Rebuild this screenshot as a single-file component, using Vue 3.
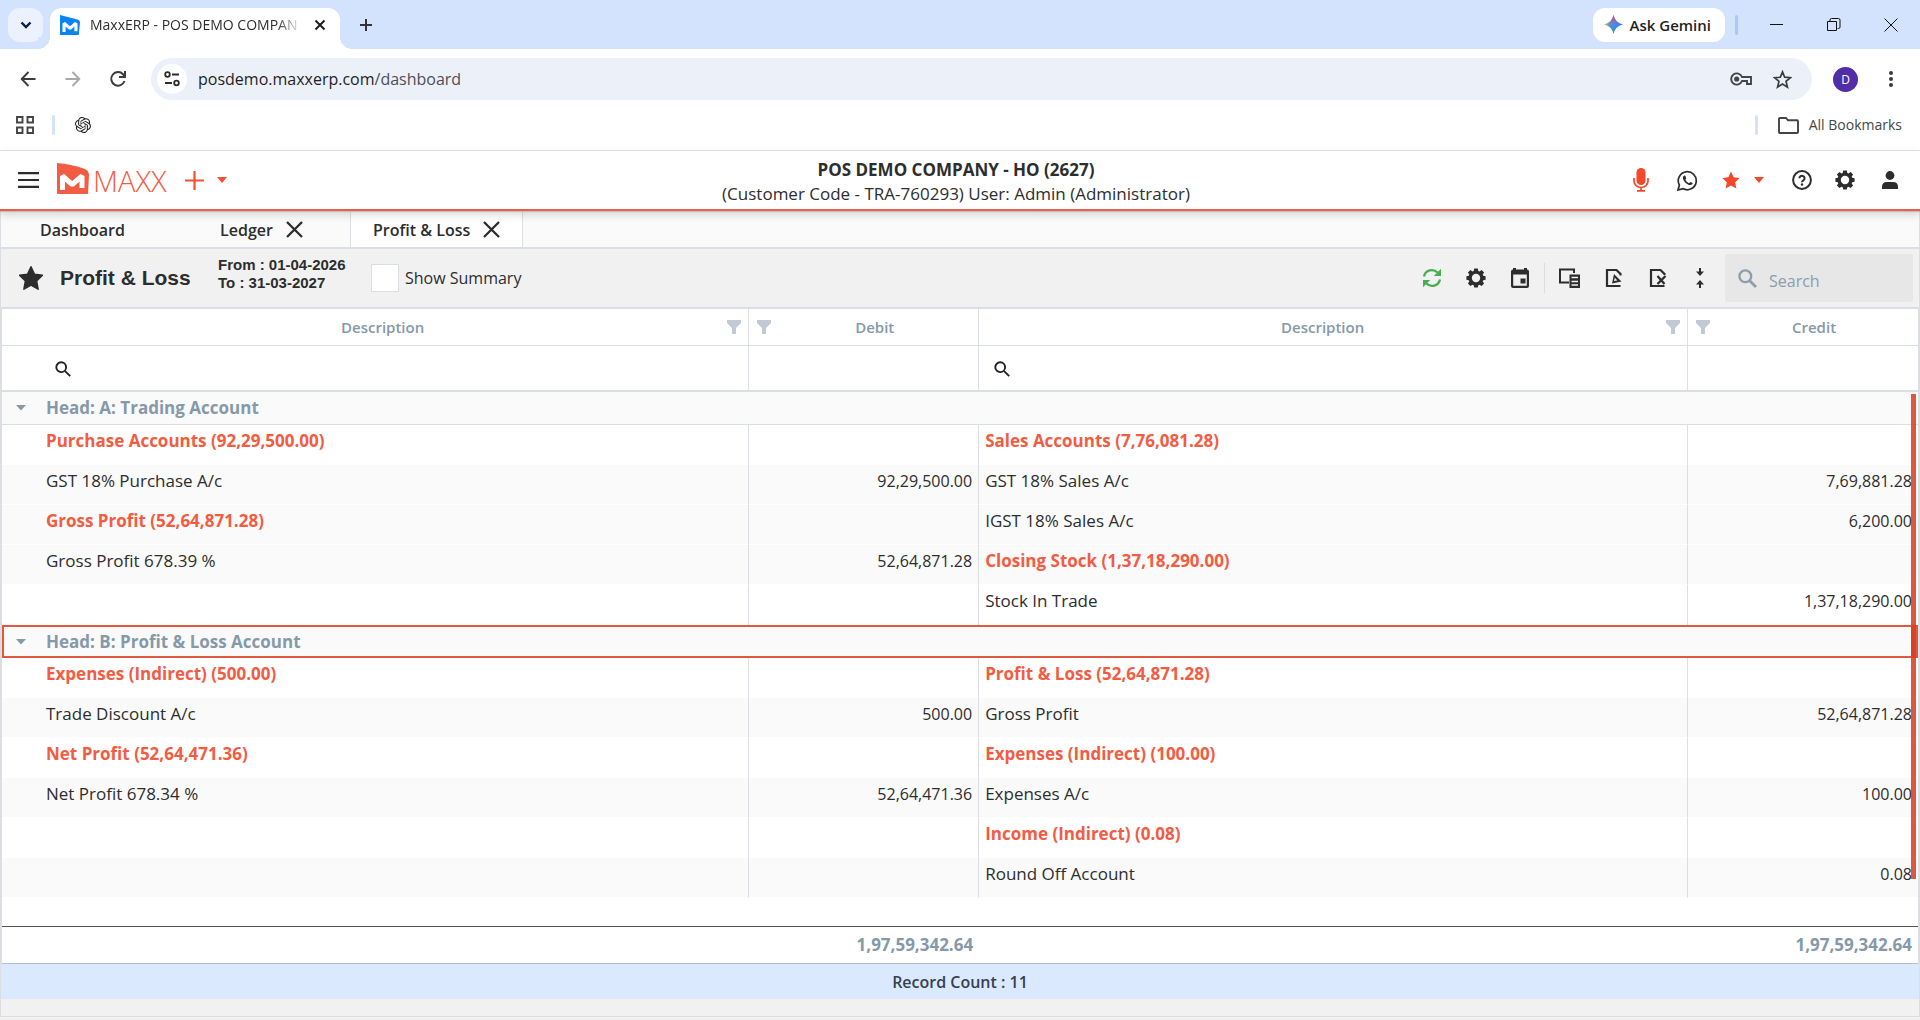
<template>
  <div class="page">
    <header class="browser">
      <div class="tab-strip">
        <button class="tab-search" aria-label="Search tabs">
          <svg width="14" height="14" viewBox="0 0 14 14"><path d="M2.5 4.5 7 9l4.5-4.5" fill="none" stroke="#0b1d4d" stroke-width="2.4" /></svg>
        </button>
        <div class="browser-tab">
          <svg width="20" height="20" viewBox="0 0 32 32"><path d="M0 0 28 7q4 1 4 5l-2 20H0z" fill="#0a84f0" /><path d="M6.500 27V13L16 21.500 25.500 13v13" fill="none" stroke="#fff" stroke-width="5" stroke-linejoin="bevel" /></svg>
          <span class="browser-tab-title">MaxxERP - POS DEMO COMPAN</span>
          <button class="plain" aria-label="Close tab">
            <svg width="12" height="12" viewBox="0 0 12 12"><path d="m1.500 1.500 9 9m0-9-9 9" stroke="#1f1f1f" stroke-width="2" /></svg>
          </button>
        </div>
        <button class="plain new-tab" aria-label="New tab">
          <svg width="14" height="14" viewBox="0 0 14 14"><path d="M7 1v12M1 7h12" stroke="#333" stroke-width="2" /></svg>
        </button>
        <button class="gemini">
          <svg width="19" height="19" viewBox="0 0 20 20">
            <defs>
              <linearGradient id="gem" x1="0" y1="0.3" x2="1" y2="0.6">
                <stop offset="0" stop-color="#f7b916" />
                <stop offset="0.35" stop-color="#5a8fdc" />
                <stop offset="1" stop-color="#2f7cf6" />
              </linearGradient>
              <linearGradient id="gemv" x1="0" y1="0" x2="0" y2="1">
                <stop offset="0" stop-color="#f0424a" />
                <stop offset="0.45" stop-color="#f0424a" stop-opacity="0" />
                <stop offset="0.65" stop-color="#19b55a" stop-opacity="0" />
                <stop offset="1" stop-color="#19b55a" />
              </linearGradient>
            </defs>
            <path d="M10 0q1.500 8 10 10-8.500 2-10 10Q8.500 12 0 10 8.500 8 10 0" fill="url(#gem)" />
            <path d="M10 0q1.500 8 10 10-8.500 2-10 10Q8.500 12 0 10 8.500 8 10 0" fill="url(#gemv)" />
          </svg>
          Ask Gemini
        </button>
        <span class="strip-line"></span>
        <div class="window-buttons">
          <button class="plain" aria-label="Minimize"><svg width="14" height="14" viewBox="0 0 14 14"><path d="M0 6.500h13" stroke="#111" /></svg></button>
          <button class="plain" aria-label="Restore"><svg width="14" height="14" viewBox="0 0 14 14"><path d="M.5 3.500h9v9h-9zM3 3V2q0-1.500 1.500-1.500h7q1.500 0 1.500 1.500v7q0 1.500-1.500 1.500h-1" fill="none" stroke="#111" /></svg></button>
          <button class="plain" aria-label="Close"><svg width="14" height="14" viewBox="0 0 14 14"><path d="m.5.5 13 13m0-13-13 13" stroke="#111" /></svg></button>
        </div>
      </div>

      <div class="nav-bar">
        <button class="plain nav-btn" aria-label="Back"><svg width="16" height="16" viewBox="0 0 16 16"><path d="M15.500 8H2m6.500-7L1.700 8l6.800 7" fill="none" stroke="#3c3c3c" stroke-width="1.900" /></svg></button>
        <button class="plain nav-btn" aria-label="Forward"><svg width="16" height="16" viewBox="0 0 16 16"><path d="M.5 8H14M7.500 1l6.800 7-6.800 7" fill="none" stroke="#a9a9a9" stroke-width="1.900" /></svg></button>
        <button class="plain nav-btn" aria-label="Reload"><svg width="18" height="18" viewBox="0 0 18 18"><path d="M15.500 11A6.800 6.800 0 1 1 14 4.200l1.500 2M16 1v6h-6" fill="none" stroke="#3c3c3c" stroke-width="2" /></svg></button>
        <div class="address">
          <button class="site-info" aria-label="View site information">
            <svg width="16" height="16" viewBox="0 0 16 16"><g fill="none" stroke="#2b2b2b" stroke-width="1.800"><circle cx="3.500" cy="3.500" r="2.300" /><path d="M8 3.500h7M1 12h7" /><circle cx="12.500" cy="12" r="2.300" /></g></svg>
          </button>
          <span class="url">posdemo.maxxerp.com<span class="url-path">/dashboard</span></span>
          <button class="plain" aria-label="Passwords">
            <svg width="23" height="14" viewBox="0 0 23 14"><g fill="none" stroke="#444" stroke-width="1.900"><path d="M12 5A5.600 5.600 0 1 0 12 9h5v3h4V5z" /></g><circle cx="6.700" cy="7" r="2.600" fill="#444" /></svg>
          </button>
          <button class="plain" aria-label="Bookmark this page">
            <svg width="19" height="19" viewBox="0 0 20 20"><path d="m10 2 2.300 5.600 6.100.5-4.700 3.900 1.500 6L10 14.700 4.800 18l1.500-6-4.700-3.900 6.100-.5z" fill="none" stroke="#3c3c3c" stroke-width="1.800" /></svg>
          </button>
        </div>
        <span class="avatar">D</span>
        <button class="plain menu-dots" aria-label="Menu"><svg width="6" height="18" viewBox="0 0 6 18"><g fill="#3c3c3c"><circle cx="3" cy="3" r="2" /><circle cx="3" cy="9" r="2" /><circle cx="3" cy="15" r="2" /></g></svg></button>
      </div>

      <div class="bookmarks">
        <svg width="18" height="18" viewBox="0 0 18 18"><path d="M1 1h5.500v5.500H1zM11.500 1H17v5.500h-5.500zM1 11.500h5.500V17H1zM11.500 11.500H17V17h-5.500z" fill="none" stroke="#444" stroke-width="1.900" /></svg>
        <span class="mark-line"></span>
        <svg width="16" height="16" viewBox="0 0 24 24"><path :d="knotPath" fill="#222" /></svg>
        <span class="mark-line right"></span>
        <svg width="21" height="17" viewBox="0 0 21 17"><path d="M1 2q0-1 1-1h6l2 2.300h9q1 0 1 1V15q0 1-1 1H2q-1 0-1-1z" fill="none" stroke="#444" stroke-width="1.900" /></svg>
        <a href="#" class="all-bookmarks">All Bookmarks</a>
      </div>
    </header>

    <header class="app-header">
      <div class="header-side">
        <button class="plain" aria-label="Menu"><svg width="21" height="16" viewBox="0 0 21 16"><path d="M0 1.200h21M0 8h21M0 14.800h21" stroke="#2d2d2d" stroke-width="2.200" /></svg></button>
        <a href="#" class="logo">
          <svg width="32" height="31" viewBox="0 0 32 31"><path d="M0 0q14 1 28 6 4 2 4 6l-1 19H0z" fill="#f25c43" /><path d="M5.500 27V13l9.700 8.500L25 13v12" fill="none" stroke="#fff" stroke-width="5" stroke-linejoin="bevel" /></svg>
          <span>MAXX</span>
        </a>
        <button class="plain create" aria-label="Create">
          <svg width="19" height="19" viewBox="0 0 19 19"><path d="M9.500 0v19M0 9.500h19" stroke="#f4502f" stroke-width="2.200" /></svg>
          <svg width="10" height="6" viewBox="0 0 10 6"><path d="M0 0h10L5 6z" fill="#f4502f" /></svg>
        </button>
      </div>
      <div class="company">
        <strong>POS DEMO COMPANY - HO (2627)</strong>
        <span>(Customer Code - TRA-760293) User: Admin (Administrator)</span>
      </div>
      <div class="header-side end">
        <button class="plain mic" aria-label="Voice">
          <svg width="16" height="24" viewBox="0 0 16 24"><rect x="3.500" y="0" width="9" height="17" rx="4.500" fill="#f4482b" /><path d="M1 10v3a7 6.500 0 0 0 14 0v-3M8 19v4M4 22.800h8" fill="none" stroke="#f4482b" stroke-width="1.700" /></svg>
        </button>
        <button class="plain whatsapp" aria-label="WhatsApp">
          <svg width="21" height="21" viewBox="0 0 21 21"><path d="M1 20l1.400-4.900a9 9 0 1 1 3.500 3.500z" fill="none" stroke="#2d2d2d" stroke-width="1.700" /><path d="M7.500 5.500c-.5 0-1.800 1-1.600 2.700.3 2.800 3.900 6.600 7.200 6.900 1.500.1 2.700-1 2.600-2l-2.300-1.200-1.400 1.300c-1.500-.5-3-2-3.700-3.600l1-1.200-1-2.700z" fill="#2d2d2d" /></svg>
        </button>
        <button class="plain favs" aria-label="Favourites">
          <svg width="18" height="18" viewBox="0 0 24 24"><path :d="starPath" fill="#f4482b" /></svg>
          <svg width="10" height="6" viewBox="0 0 10 6"><path d="M0 0h10L5 6z" fill="#f4482b" /></svg>
        </button>
        <button class="plain help" aria-label="Help">
          <svg width="20" height="20" viewBox="0 0 20 20"><g fill="none" stroke="#2d2d2d" stroke-width="2"><circle cx="10" cy="10" r="8.900" /><path d="M7.400 8.200a2.600 2.400 0 1 1 4.200 1.900q-1.600 1-1.600 2.100" /></g><circle cx="10" cy="14.500" r="1.200" fill="#2d2d2d" /></svg>
        </button>
        <button class="plain" aria-label="Settings"><svg width="20" height="20" viewBox="2 2 20 20"><path :d="gearPath" fill="#2d2d2d" fill-rule="evenodd" /></svg></button>
        <button class="plain user" aria-label="Account">
          <svg width="16" height="18" viewBox="0 0 16 18"><circle cx="8" cy="4.500" r="4.400" fill="#2d2d2d" /><path d="M0 18v-2q0-5 5-5h6q5 0 5 5v2z" fill="#2d2d2d" /></svg>
        </button>
      </div>
    </header>

    <main class="workspace">
      <nav class="tabs">
        <div v-for="tab in tabs" :key="tab.name" class="tab" :class="{ active: tab.name === current, home: !tab.closable }">
          <button class="plain tab-name" @click="current = tab.name">{{ tab.name }}</button>
          <button v-if="tab.closable" class="plain" aria-label="Close">
            <svg width="17" height="17" viewBox="0 0 17 17"><path d="m1 1 15 15m0-15L1 16" stroke="#2d2d2d" stroke-width="2.300" /></svg>
          </button>
        </div>
      </nav>

      <section class="toolbar">
        <svg width="24" height="24" viewBox="0 0 24 24"><path :d="starPath" fill="#2d2d2d" stroke="#2d2d2d" stroke-width="1.500" stroke-linejoin="round" /></svg>
        <h1>Profit &amp; Loss</h1>
        <p class="period">From : 01-04-2026<br />To : 31-03-2027</p>
        <label class="summary"><input v-model="showSummary" type="checkbox" />Show Summary</label>
        <div class="tools">
          <button class="plain" aria-label="Refresh">
            <svg width="20" height="20" viewBox="0 0 20 20"><path d="M2 8.500A8 8 0 0 1 15.500 4.500M18 11.500A8 8 0 0 1 4.500 15.500" fill="none" stroke="#48ae4c" stroke-width="2.300" /><path d="M19 .800V8h-7.200zM1 19.200V12h7.200z" fill="#48ae4c" /></svg>
          </button>
          <button class="plain" aria-label="Options"><svg width="20" height="20" viewBox="2 2 20 20"><path :d="gearPath" fill="#2d2d2d" fill-rule="evenodd" /></svg></button>
          <button class="plain" aria-label="Period">
            <svg width="20" height="20" viewBox="0 0 20 20"><path d="M3 0h3v1.500h8V0h3v1.500q2 0 2 2V18q0 2-2 2H3q-2 0-2-2V3.500q0-2 2-2zM3.200 6.500V17.800h13.600V6.500z" fill="#2d2d2d" fill-rule="evenodd" /><path d="M10.500 10.500h5v5h-5z" fill="#2d2d2d" /></svg>
          </button>
          <span class="tool-line"></span>
          <button class="plain" aria-label="Choose columns">
            <svg width="21" height="20" viewBox="0 0 21 20"><path d="M10 14.500H1V1.500h14V5" fill="none" stroke="#2d2d2d" stroke-width="2" /><path d="M10.500 6.500H21V20H10.500z" fill="#2d2d2d" /><path d="M12.500 9.500h6.500M12.500 13.500h6.500M12.500 17h6.500" stroke="#f1f1f1" stroke-width="1.500" /></svg>
          </button>
          <button class="plain" aria-label="Export PDF">
            <svg width="20" height="20" viewBox="-1 0 20 20"><path d="M15.500 18H2V2h9.500L15.500 6v1.500" fill="none" stroke="#2d2d2d" stroke-width="2.200" /><path d="M7 15.500 9 6l7.500 7.500zM9.800 9.800 8.900 13l3.500-.6z" fill="#2d2d2d" fill-rule="evenodd" /></svg>
          </button>
          <button class="plain" aria-label="Export Excel">
            <svg width="20" height="20" viewBox="-1 0 20 20"><path d="M15.500 18H2V2h9.500L15.500 6v1" fill="none" stroke="#2d2d2d" stroke-width="2.200" /><path d="m8.500 8 7 8m1-8-8 8" stroke="#2d2d2d" stroke-width="2.300" /></svg>
          </button>
          <button class="plain" aria-label="Collapse all">
            <svg width="16" height="20" viewBox="-4 0 16 20"><path d="M4 0v5M4 20v-5" stroke="#2d2d2d" stroke-width="2" /><path d="M0 3.500h8L4 8zM0 16.500h8L4 12z" fill="#2d2d2d" /></svg>
          </button>
        </div>
        <label class="search">
          <svg width="19" height="19" viewBox="0 0 19 19"><g fill="none" stroke="#8c9dad"><circle cx="7.300" cy="7.300" r="5.900" stroke-width="2.300" /><path d="m11.700 11.700 6.300 6.300" stroke-width="2.800" /></g></svg>
          <input type="text" placeholder="Search" aria-label="Search" />
        </label>
      </section>

      <div class="grid">
        <table>
          <colgroup>
            <col class="col-desc" />
            <col class="col-amount" />
            <col class="col-desc-right" />
            <col class="col-amount" />
          </colgroup>
          <thead>
            <tr class="titles">
              <th v-for="(title, i) in columns" :key="i">
                <div class="title" :class="{ amount: i % 2 }">
                  <span>{{ title }}</span>
                  <svg width="14" height="14" viewBox="0 0 14 14"><path d="M0 0h14v3L9 8v6H5V8L0 3z" fill="#c1cad2" /></svg>
                </div>
              </th>
            </tr>
            <tr class="filters">
              <td v-for="(title, i) in columns" :key="i">
                <label v-if="i % 2 === 0" class="filter">
                  <svg width="16" height="16" viewBox="0 0 16 16"><g fill="none" stroke="#222" stroke-width="1.900"><circle cx="6.200" cy="6.200" r="4.900" /><path d="m9.800 9.800 5.400 5.400" /></g></svg>
                  <input type="text" :aria-label="`Filter ${title}`" />
                </label>
              </td>
            </tr>
          </thead>
          <tbody v-for="group in groups" :key="group.name">
            <tr class="group" :class="{ focused: group.focused }">
              <td colspan="4">
                <div class="group-name">
                  <svg width="10" height="6" viewBox="0 0 10 6"><path d="M0 0h10L5 5.500z" fill="#8699a9" /></svg>
                  {{ group.name }}
                </div>
              </td>
            </tr>
            <tr v-for="(row, i) in group.rows" :key="i" class="row" :class="{ shaded: row.shaded }">
              <td :class="{ head: row.leftHead }">{{ row.left }}</td>
              <td class="num">{{ row.debit }}</td>
              <td :class="{ head: row.rightHead }">{{ row.right }}</td>
              <td class="num">{{ row.credit }}</td>
            </tr>
          </tbody>
          <tfoot>
            <tr class="spacer"><td colspan="4"></td></tr>
            <tr class="totals">
              <td></td>
              <td>1,97,59,342.64</td>
              <td></td>
              <td>1,97,59,342.64</td>
            </tr>
          </tfoot>
        </table>
        <div class="scroll-thumb"></div>
      </div>
      <div class="record-count">Record Count : 11</div>
      <div class="rest"></div>
    </main>
  </div>
</template>

<script setup>
import { ref } from 'vue'

const current = ref('Profit & Loss')
const showSummary = ref(false)

const tabs = [
  { name: 'Dashboard', closable: false },
  { name: 'Ledger', closable: true },
  { name: 'Profit & Loss', closable: true },
]

const columns = ['Description', 'Debit', 'Description', 'Credit']

const groups = [
  {
    name: 'Head: A: Trading Account',
    rows: [
      { left: 'Purchase Accounts (92,29,500.00)', leftHead: true, right: 'Sales Accounts (7,76,081.28)', rightHead: true },
      { left: 'GST 18% Purchase A/c', debit: '92,29,500.00', right: 'GST 18% Sales A/c', credit: '7,69,881.28', shaded: true },
      { left: 'Gross Profit (52,64,871.28)', leftHead: true, right: 'IGST 18% Sales A/c', credit: '6,200.00', shaded: true },
      { left: 'Gross Profit 678.39 %', debit: '52,64,871.28', right: 'Closing Stock (1,37,18,290.00)', rightHead: true, shaded: true },
      { right: 'Stock In Trade', credit: '1,37,18,290.00' },
    ],
  },
  {
    name: 'Head: B: Profit & Loss Account',
    focused: true,
    rows: [
      { left: 'Expenses (Indirect) (500.00)', leftHead: true, right: 'Profit & Loss (52,64,871.28)', rightHead: true },
      { left: 'Trade Discount A/c', debit: '500.00', right: 'Gross Profit', credit: '52,64,871.28', shaded: true },
      { left: 'Net Profit (52,64,471.36)', leftHead: true, right: 'Expenses (Indirect) (100.00)', rightHead: true },
      { left: 'Net Profit 678.34 %', debit: '52,64,471.36', right: 'Expenses A/c', credit: '100.00', shaded: true },
      { right: 'Income (Indirect) (0.08)', rightHead: true },
      { right: 'Round Off Account', credit: '0.08', shaded: true },
    ],
  },
]

const starPath = 'M12 .8l3.500 7.500 8 1-5.900 5.700 1.500 8.200L12 19.200l-7.100 4 1.500-8.200L.5 9.300l8-1z'

// eight-toothed cog with an open centre
const gearPath = 'M10.200 2.500h3.600l.5 2.400 1.200.5 2.100-1.400 2.500 2.500-1.400 2.100.5 1.200 2.400.5v3.500l-2.400.5-.5 1.200 1.400 2.100-2.500 2.500-2.100-1.400-1.200.5-.5 2.400h-3.600l-.5-2.400-1.200-.5-2.100 1.400-2.500-2.500 1.400-2.100-.5-1.200-2.400-.5v-3.500l2.400-.5.5-1.200-1.400-2.100L6.400 4l2.100 1.400 1.200-.5zM12 7.800a4.200 4.200 0 1 0 0 8.400 4.200 4.200 0 0 0 0-8.400z'

const knotPath = 'M22.2819 9.8211a5.9847 5.9847 0 0 0-.5157-4.9108 6.0462 6.0462 0 0 0-6.5098-2.9A6.0651 6.0651 0 0 0 4.9807 4.1818a5.9847 5.9847 0 0 0-3.9977 2.9 6.0462 6.0462 0 0 0 .7427 7.0966 5.98 5.98 0 0 0 .511 4.9107 6.051 6.051 0 0 0 6.5146 2.9001A5.9847 5.9847 0 0 0 13.2599 24a6.0557 6.0557 0 0 0 5.7718-4.2058 5.9894 5.9894 0 0 0 3.9977-2.9001 6.0557 6.0557 0 0 0-.7475-7.0729zm-9.022 12.6081a4.4755 4.4755 0 0 1-2.8764-1.0408l.1419-.0804 4.7783-2.7582a.7948.7948 0 0 0 .3927-.6813v-6.7369l2.02 1.1686a.071.071 0 0 1 .038.052v5.5826a4.504 4.504 0 0 1-4.4945 4.4944zm-9.6607-4.1254a4.4708 4.4708 0 0 1-.5346-3.0137l.142.0852 4.783 2.7582a.7712.7712 0 0 0 .7806 0l5.8428-3.3685v2.3324a.0804.0804 0 0 1-.0332.0615L9.74 19.9502a4.4992 4.4992 0 0 1-6.1408-1.6464zM2.3408 7.8956a4.485 4.485 0 0 1 2.3655-1.9728V11.6a.7664.7664 0 0 0 .3879.6765l5.8144 3.3543-2.0201 1.1685a.0757.0757 0 0 1-.071 0l-4.8303-2.7865A4.504 4.504 0 0 1 2.3408 7.872zm16.5963 3.8558L13.1038 8.364 15.1192 7.2a.0757.0757 0 0 1 .071 0l4.8303 2.7913a4.4944 4.4944 0 0 1-.6765 8.1042v-5.6772a.79.79 0 0 0-.407-.667zm2.0107-3.0231l-.142-.0852-4.7735-2.7818a.7759.7759 0 0 0-.7854 0L9.409 9.2297V6.8974a.0662.0662 0 0 1 .0284-.0615l4.8303-2.7866a4.4992 4.4992 0 0 1 6.6802 4.66zM8.3065 12.863l-2.02-1.1638a.0804.0804 0 0 1-.038-.0567V6.0742a4.4992 4.4992 0 0 1 7.3757-3.4537l-.142.0805L8.704 5.459a.7948.7948 0 0 0-.3927.6813zm1.0976-2.3654l2.602-1.4998 2.6069 1.4998v2.9994l-2.5974 1.4997-2.6067-1.4997Z'
</script>

<style>
body {
  margin: 0;
  background: #f1f1f1;
}
</style>

<style scoped>
.page {
  display: flex;
  flex-direction: column;
  min-height: 100vh;
  font-family: 'Open Sans', 'Noto Sans', sans-serif;
  font-size: 16px;
  line-height: 24px;
  color: #2d2d2d;
}
.page * {
  box-sizing: border-box;
}
svg {
  display: block;
  flex: none;
}
.plain {
  display: flex;
  align-items: center;
  justify-content: center;
  padding: 0;
  border: none;
  background: none;
  font: inherit;
  color: inherit;
}
input {
  min-width: 0;
  padding: 0;
  border: none;
  background: none;
  font: inherit;
  color: inherit;
}

/* browser chrome */
.browser {
  background: #fff;
  border-bottom: 1px solid #dfe1e5;
}
.tab-strip {
  display: flex;
  align-items: center;
  height: 49px;
  padding: 0 22px 0 8px;
  background: #d3e3fd;
}
.tab-search {
  display: flex;
  align-items: center;
  justify-content: center;
  width: 35px;
  height: 34px;
  padding: 0;
  border: none;
  border-radius: 12px;
  background: #ebf2fe;
}
.browser-tab {
  position: relative;
  display: flex;
  align-items: center;
  align-self: flex-end;
  width: 290px;
  height: 41px;
  margin-left: 7px;
  padding: 0 14px 7px 10px;
  border-radius: 12px 12px 0 0;
  background: #fff;
}
.browser-tab::before,
.browser-tab::after {
  content: '';
  position: absolute;
  bottom: 0;
  width: 12px;
  height: 12px;
}
.browser-tab::before {
  right: 100%;
  background: radial-gradient(circle at 0 0, #d3e3fd 12px, #fff 12px);
}
.browser-tab::after {
  left: 100%;
  background: radial-gradient(circle at 100% 0, #d3e3fd 12px, #fff 12px);
}
.browser-tab-title {
  flex: 1;
  margin: 0 12px 0 10px;
  white-space: nowrap;
  font-size: 14px;
  mask-image: linear-gradient(to right, #000 88%, transparent);
}
.new-tab {
  margin-left: 19px;
}
.gemini {
  display: flex;
  align-items: center;
  gap: 7px;
  height: 34px;
  margin-left: auto;
  padding: 0 14px 0 11px;
  border: none;
  border-radius: 12px;
  background: #fff;
  font: 600 15px/20px 'Open Sans', 'Noto Sans', sans-serif;
  color: #1f1f1f;
}
.strip-line {
  width: 3px;
  height: 20px;
  margin-left: 10px;
  border-radius: 2px;
  background: #a8c7fa;
}
.window-buttons {
  display: flex;
  gap: 43px;
  margin-left: 32px;
}
.nav-bar {
  display: flex;
  align-items: center;
  height: 60px;
  padding: 0 26px 0 10px;
}
.nav-btn {
  width: 36px;
  margin-right: 9px;
}
.address {
  display: flex;
  flex: 1;
  align-items: center;
  gap: 20px;
  height: 42px;
  margin-left: 6px;
  padding: 0 20px 0 6px;
  border-radius: 21px;
  background: #ecf0f9;
}
.site-info {
  display: flex;
  align-items: center;
  justify-content: center;
  width: 30px;
  height: 30px;
  margin-right: -9px;
  padding: 0;
  border: none;
  border-radius: 50%;
  background: #fff;
}
.url {
  flex: 1;
  color: #1f1f1f;
}
.url-path {
  color: #4b4f55;
}
.avatar {
  width: 25px;
  height: 25px;
  margin-left: 21px;
  border-radius: 50%;
  background: #512da8;
  color: #fff;
  font-size: 12px;
  line-height: 25px;
  text-align: center;
}
.menu-dots {
  margin-left: 30px;
}
.bookmarks {
  display: flex;
  align-items: center;
  height: 41px;
  padding: 0 18px 9px 16px;
}
.mark-line {
  width: 3px;
  height: 20px;
  margin: 0 20px 0 18px;
  border-radius: 2px;
  background: #d3e3fd;
}
.mark-line.right {
  margin-left: auto;
}
.all-bookmarks {
  margin-left: 10px;
  font-size: 14px;
  color: #444746;
  text-decoration: none;
}

/* application header */
.app-header {
  position: relative;
  z-index: 1;
  display: flex;
  align-items: center;
  justify-content: space-between;
  height: 60px;
  padding: 0 22px 0 18px;
  border-bottom: 2px solid #f25c43;
  background: #fff;
  box-shadow: 0 1px 1px #b9c3cb, 0 4px 8px rgba(0, 0, 0, 0.14);
}
.header-side {
  display: flex;
  flex: 1;
  align-items: center;
}
.header-side.end {
  justify-content: flex-end;
}
.logo {
  display: flex;
  align-items: flex-end;
  gap: 4px;
  margin-left: 18px;
  padding-bottom: 4px;
  color: #f25c43;
  text-decoration: none;
}
.logo span {
  font: 300 29px/26px 'Open Sans', 'Noto Sans', sans-serif;
}
.create {
  gap: 13px;
  margin-left: 18px;
}
.company {
  display: flex;
  flex-direction: column;
  align-items: center;
  padding: 3px 4px 0 0;
  font-size: 17px;
  white-space: nowrap;
}
.company strong {
  font-weight: 700;
}
.mic {
  margin-right: 28px;
}
.whatsapp {
  margin-right: 24px;
}
.favs {
  gap: 14px;
  margin-right: 28px;
}
.help {
  margin-right: 23px;
}
.user {
  margin-left: 27px;
}

/* workspace */
.workspace {
  display: flex;
  flex: 1;
  flex-direction: column;
  margin-bottom: 3px;
  border: solid #dbdfe4;
  border-width: 0 1px 1px;
}
.tabs {
  display: flex;
  height: 38px;
  border-bottom: 2px solid #dbdfe4;
  background: #fafafa;
  font-weight: 600;
}
.tab {
  display: flex;
  align-items: center;
  gap: 13px;
  padding: 0 22px;
  border-right: 1px solid transparent;
}
.tab.home {
  width: 197px;
  padding-left: 39px;
}
.tab:nth-child(2) {
  width: 152px;
}
.tab.active {
  border-right-color: #dbdfe4;
  border-left: 1px solid #dbdfe4;
  background: #fff;
}
.tab-name {
  padding-top: 2px;
}
.toolbar {
  display: flex;
  align-items: center;
  height: 60px;
  padding: 0 6px 0 18px;
  border-bottom: 2px solid #dbdfe4;
  background: #f1f1f1;
}
h1 {
  width: 132px;
  margin: 0 0 0 17px;
  font: 700 21px/30px 'Liberation Sans', sans-serif;
  white-space: nowrap;
}
.period {
  width: 126px;
  margin: 0 0 8px 26px;
  font: 700 15px/18px 'Liberation Sans', sans-serif;
  white-space: nowrap;
}
.summary {
  display: flex;
  align-items: center;
  gap: 6px;
  margin-left: 27px;
  white-space: nowrap;
}
.summary input {
  width: 28px;
  height: 28px;
  margin: 0;
  border: 1px solid #dbdfe4;
  background: #fff;
  appearance: none;
}
.summary input:checked {
  background: #f25c43;
}
.tools {
  display: flex;
  align-items: center;
  gap: 24px;
  margin-left: auto;
}
.tool-line {
  width: 1px;
  height: 30px;
  margin: 0 -10px;
  background: #d9dde1;
}
.search {
  display: flex;
  align-items: center;
  gap: 12px;
  width: 188px;
  height: 48px;
  margin-left: 17px;
  padding-left: 13px;
  border-radius: 2px;
  background: #e7e7e7;
}
.search input {
  flex: 1;
  height: 30px;
  padding-top: 6px;
}
.search input::placeholder {
  color: #8c9dad;
  opacity: 1;
}

/* report grid */
.grid {
  position: relative;
  border: solid #dbdfe4;
  border-width: 0 1px;
  background: #fff;
}
table {
  width: 100%;
  border-spacing: 0;
  table-layout: fixed;
}
.col-desc {
  width: 39%;
}
.col-desc-right {
  width: 37%;
}
.col-amount {
  width: 12%;
}
th,
td {
  padding: 0 6px;
  border-right: 1px solid #dbdfe4;
  text-align: left;
  white-space: nowrap;
}
th:last-child,
td:last-child {
  border-right: none;
}
td:first-child {
  padding-left: 44px;
}
.titles th {
  height: 37px;
  padding: 0;
  border-bottom: 1px solid #dbdfe4;
  font-size: 15px;
  font-weight: 600;
  color: #8699a9;
}
.titles th:first-child {
  padding-left: 36px;
}
.title {
  display: flex;
  align-items: center;
  padding-right: 7px;
  text-align: center;
}
.title.amount {
  flex-direction: row-reverse;
  padding: 0 0 0 8px;
}
.title span {
  flex: 1;
}
.filters td {
  height: 46px;
  border-bottom: 2px solid #dbdfe4;
}
.filter {
  display: flex;
  align-items: center;
  gap: 8px;
  padding: 2px 0 0 9px;
}
.filter input {
  flex: 1;
}
.group td {
  height: 33px;
  padding: 0 14px;
  border-bottom: 1px solid #dbdfe4;
  background: #fafafa;
  font-size: 17px;
  font-weight: 700;
  color: #8699a9;
}
.group.focused td {
  border: 2px solid #de5940;
  border-right-width: 7px;
  padding: 0 12px;
}
.group-name {
  display: flex;
  align-items: center;
  gap: 20px;
}
.row td {
  height: 40px;
  padding-top: 4px;
  padding-bottom: 12px;
  font-size: 17px;
}
.row.shaded td {
  border-bottom: 1px solid #fff;
  background: #fafafa;
  padding-bottom: 11px;
}
.row .head {
  color: #f25c43;
  font-weight: 700;
}
.row .num {
  font-size: 16px;
  text-align: right;
}
.spacer td {
  height: 29px;
  border-bottom: 1px solid #555;
}
.totals td {
  height: 37px;
  border-right: none;
  border-bottom: 1px solid #b9bcc2;
  color: #8699a9;
  font-size: 17px;
  font-weight: 700;
  text-align: right;
}
.scroll-thumb {
  position: absolute;
  top: 85px;
  right: 2px;
  bottom: 85px;
  width: 5px;
  background: rgba(218, 62, 32, 0.87);
}
.record-count {
  height: 35px;
  background: #dbe9fe;
  color: #37404d;
  font-weight: 600;
  line-height: 36px;
  text-align: center;
}
.rest {
  flex: 1;
  background: #f1f1f1;
}
</style>
